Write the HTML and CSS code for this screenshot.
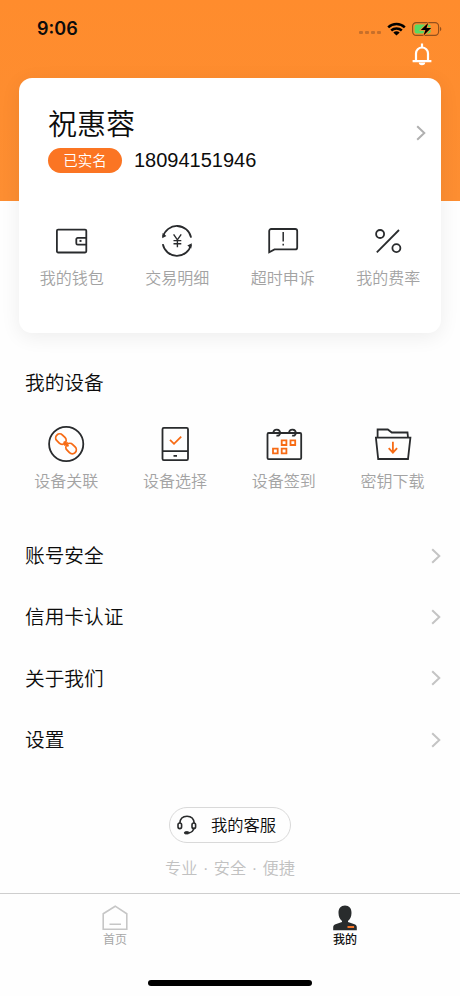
FILE: index.html
```html
<!DOCTYPE html>
<html lang="zh-CN">
<head>
<meta charset="utf-8">
<meta name="viewport" content="width=device-width, initial-scale=1">
<title>我的</title>
<link rel="stylesheet" href="styles.css">
</head>
<body>
<div class="app">
  <header class="hero">
    <div class="status">
      <span class="time">9:06</span>
      <div class="signals">
        <span class="dots"><i></i><i></i><i></i><i></i></span>
        <svg class="wifi" width="19" height="14" viewBox="0 0 19 14" fill="none" stroke="#000" stroke-width="2.5"><path d="M1.2 5.3a12 12 0 0 1 16.6 0M4.2 8.5a7.8 7.8 0 0 1 10.6 0"/><path d="M9.5 13.5 6.3 10.6a4.8 4.8 0 0 1 6.4 0z" fill="#000" stroke="none"/></svg>
        <svg class="battery" width="30" height="16" viewBox="0 0 30 16"><rect x=".6" y="1.6" width="26" height="12.8" rx="3.6" fill="none" stroke="#93501d" stroke-width="1.2"/><rect x="2.6" y="3.6" width="16" height="8.8" rx="2" fill="#58da63"/><path d="M28 5.8c1.8.7 1.8 3.7 0 4.4z" fill="#93501d"/><path d="M16.3 1.8 8.8 9h4.6l-1.9 5.5L19.2 7h-4.7z" fill="#000" stroke="#ff8c2e" stroke-width="1.6" paint-order="stroke"/></svg>
      </div>
    </div>
    <div class="notice">
      <svg width="20" height="24" viewBox="0 0 20 24" fill="none" stroke="#fff" stroke-width="2.2"><path d="M4 18.2V10.5a6 6 0 0 1 12 0v7.7M.6 18.2h18.800M10 .4v4"/><path d="M6.8 19.5h6.4a3.2 2.8 0 0 1-6.4 0z" fill="#fff" stroke="none"/></svg>
    </div>
    <section class="card">
      <div class="profile">
        <div class="identity">
          <h1>祝惠蓉</h1>
          <div class="meta"><span class="badge">已实名</span><span class="phone">18094151946</span></div>
        </div>
        <svg class="arrow" width="10" height="16" viewBox="0 0 10 16"><path d="M1.2 1.2 8.3 8l-7.1 6.8"/></svg>
      </div>
      <div class="grid">
        <a class="tile">
          <svg class="icon" viewBox="0 0 36 36"><rect x="2.9" y="6.6" width="29.4" height="22.9" rx="1.2"/><path d="M32.3 14.9h-8.6a1.4 1.4 0 0 0-1.4 1.4v3.9a1.4 1.4 0 0 0 1.4 1.4h8.6"/><rect class="solid" x="25.5" y="16.9" width="2" height="2"/></svg>
          <span>我的钱包</span>
        </a>
        <a class="tile">
          <svg class="icon" viewBox="0 0 36 36"><path d="M4 13.8a14.4 14.4 0 0 1 28.1.9M3.8 21.2A14.4 14.4 0 0 0 32 21.6"/><path class="solid" d="m3.2 15.3.4-5.3 3.8 3zM32.8 20.2l-.5 5.4-4-3z"/><path d="m14.6 11.4 3.8 5.4 3.8-5.4M18.4 16.8v7.5M14.5 17.6h7.8M14.5 20.8h7.8" stroke-width="1.4"/></svg>
          <span>交易明细</span>
        </a>
        <a class="tile">
          <svg class="icon" viewBox="0 0 36 36"><path d="M4.2 29.3V8a2 2 0 0 1 2-2h24a2 2 0 0 1 2 2v16.4a2 2 0 0 1-2 2H9.5z"/><path d="M18.2 9v9.4M18.2 20.8v1.8" stroke-width="1.5"/></svg>
          <span>超时申诉</span>
        </a>
        <a class="tile">
          <svg class="icon" viewBox="0 0 36 36"><circle cx="10.1" cy="11" r="4"/><circle cx="26.4" cy="25.1" r="4"/><path d="M6.8 29.3 29 7"/></svg>
          <span>我的费率</span>
        </a>
      </div>
    </section>
  </header>

  <main>
    <h2>我的设备</h2>
    <div class="grid devices">
      <a class="tile">
        <svg class="icon" viewBox="0 0 36 36"><circle cx="18.2" cy="18" r="17.1"/><g class="accent"><rect x="7.2" y="9.1" width="11.4" height="8" rx="4" transform="rotate(45 12.9 13.1)"/><rect x="17.4" y="18.6" width="11.4" height="8" rx="4" transform="rotate(45 23.1 22.6)"/><path d="m15.7 15.7 4.8 4.6M19.7 16.4l-3.6 3"/></g></svg>
        <span>设备关联</span>
      </a>
      <a class="tile">
        <svg class="icon" viewBox="0 0 36 36"><rect x="5.5" y="1.9" width="25.5" height="32.2" rx="1.3"/><path d="M5.5 25.2H31M16.5 29.9H20"/><path class="accent" d="m13 13.9 4 3.9 7.2-7.2"/></svg>
        <span>设备选择</span>
      </a>
      <a class="tile">
        <svg class="icon" viewBox="0 0 36 36"><rect x="1.5" y="7" width="33.7" height="26.2" rx="1.2"/><path d="M7.3 6.7c.5-4.2 6.8-4 6.8.3 0 2.3-2 3.2-3.6 2.4M23 6.7c.5-4.2 6.8-4 6.8.3 0 2.3-2 3.2-3.6 2.4"/><g class="accent"><path d="M15.7 14.3h4.7V19h-4.7zM24.5 14.3h4.7V19h-4.7zM7 22.7h4.7v4.7H7zM15.7 22.7h4.7v4.7h-4.7z"/></g></svg>
        <span>设备签到</span>
      </a>
      <a class="tile">
        <svg class="icon" viewBox="0 0 36 36"><path d="M2.6 11.5v-8h10.2l4 3h15.7l.5 5M.9 11.6h34.5L33 33H3.2z"/><path class="accent" d="M17.9 15.8v10.9M13.7 22.2l4.2 4.5 4.2-4.5"/></svg>
        <span>密钥下载</span>
      </a>
    </div>
    <nav class="menu">
      <a><span>账号安全</span><svg class="arrow" width="10" height="16" viewBox="0 0 10 16"><path d="M1.2 1.2 8.3 8l-7.1 6.8"/></svg></a>
      <a><span>信用卡认证</span><svg class="arrow" width="10" height="16" viewBox="0 0 10 16"><path d="M1.2 1.2 8.3 8l-7.1 6.8"/></svg></a>
      <a><span>关于我们</span><svg class="arrow" width="10" height="16" viewBox="0 0 10 16"><path d="M1.2 1.2 8.3 8l-7.1 6.8"/></svg></a>
      <a><span>设置</span><svg class="arrow" width="10" height="16" viewBox="0 0 10 16"><path d="M1.2 1.2 8.3 8l-7.1 6.8"/></svg></a>
    </nav>
    <a class="service">
      <svg width="20" height="20" viewBox="0 0 20 20" fill="none" stroke="#292b2c" stroke-width="1.6"><path d="M2.8 8.2C3.1 3.7 6 1.2 10 1.2s6.9 2.5 7.2 7M17 12.5c-.5 3.2-2.1 4.9-5 5.4"/><rect x="1" y="8" width="3.6" height="5.6" rx="1.8"/><rect x="15" y="8" width="3.6" height="5.6" rx="1.8"/><rect x="7.4" y="16.7" width="4.6" height="2.2" rx="1.1" fill="#292b2c" stroke-width="1"/></svg>
      <span>我的客服</span>
    </a>
    <p class="slogan">专业 · 安全 · 便捷</p>
  </main>

  <footer>
    <div class="tabs">
      <a class="tab">
        <svg width="26" height="26" viewBox="0 0 26 26" fill="none" stroke="#c6c6c6" stroke-width="1.6"><path d="M1.2 8.8 13.200 1.2l11.6 7.6v15.500H1.200zM7.500 19.300h11.500"/></svg>
        <span>首页</span>
      </a>
      <a class="tab active">
        <svg width="26" height="26" viewBox="0 0 26 26" fill="#292c2d"><path d="M13 .5c4.200 0 6.500 2.800 6.500 7.500 0 3.500-1.400 6.500-3.500 7.900v1l6.500 2.300c1.600.6 2.300 1.500 2.300 3.200V25.300H1.200v-2.900c0-1.700.7-2.600 2.300-3.200l6.500-2.300v-1C7.900 14.500 6.500 11.500 6.500 8 6.500 3.300 8.800.5 13 .5z"/><path d="M15.500 22h6.600" stroke="#f6762b" stroke-width="2"/></svg>
        <span>我的</span>
      </a>
    </div>
    <div class="home-bar"></div>
  </footer>
</div>
</body>
</html>
```
FILE: styles.css
```css
* { box-sizing: border-box; margin: 0; padding: 0; }
body {
  background: #fefefe;
  color: #0c0c0c;
  font-family: "Noto Sans CJK SC", sans-serif;
  font-weight: 350;
}
.app { width: 460px; height: 996px; display: flex; flex-direction: column; overflow: hidden; }
.hero { padding: 0 19px; background: linear-gradient(#ff8c2d, #fd8e32) no-repeat 0 0 / 100% 201px; }
.status { height: 43px; padding: 14px 0 0 18px; display: flex; justify-content: space-between; align-items: flex-start; }
.time { font: 600 18px/29px Inter, sans-serif; }
.signals { display: flex; height: 29px; align-items: center; }
.dots { display: flex; gap: 2.5px; padding-top: 8px; margin-right: 6px; }
.dots i { width: 3.6px; height: 3.6px; border-radius: 1px; background: #c76f2a; }
.wifi { margin-right: 6px; }
.battery { margin-right: -1px; }
.notice { height: 35px; display: flex; justify-content: flex-end; padding-right: 9px; }
.card { height: 255px; border-radius: 13px; background: #fff; box-shadow: 0 4px 20px rgba(0, 0, 0, .07); }
.profile { height: 145px; padding: 25px 15px 0 29px; display: flex; justify-content: space-between; }
h1 { font-size: 29px; line-height: 38px; font-weight: 350; }
.profile .arrow { margin-top: 22px; stroke: #b0b0b0; }
.meta { display: flex; align-items: center; height: 25px; margin-top: 7px; }
.badge { width: 74px; height: 25px; border-radius: 13px; background: #fb7523; color: #fff; font-size: 14.5px; line-height: 24px; text-align: center; }
.phone { margin-left: 12px; font: 400 20px/25px "Liberation Sans", sans-serif; }
.arrow { flex: none; fill: none; stroke: #c4c4c4; stroke-width: 2; }
.grid { display: grid; grid-template-columns: repeat(4, 1fr); }
.tile { display: flex; flex-direction: column; align-items: center; color: #a3a3a3; font-size: 16px; line-height: 24px; }
.icon { width: 36px; height: 36px; margin-bottom: 6px; fill: none; stroke: #292b2d; stroke-width: 1.8; overflow: visible; }
.icon .solid { fill: #292b2d; stroke: none; }
.icon .accent { stroke: #f76b15; stroke-width: 1.8; }
main { display: flex; flex-direction: column; }
h2 { margin: 34px 0 0 25px; font-size: 19.7px; line-height: 30px; font-weight: 350; }
.devices { margin: 29px 13px 0 12px; }
.menu { margin-top: 33px; padding: 0 19px 0 25px; }
.menu a { height: 61.3px; display: flex; align-items: center; justify-content: space-between; font-size: 19.7px; }
.menu span { margin-top: -2px; }
.service { align-self: center; width: 122px; height: 36px; margin-top: 37px; padding-left: 7px; display: flex; align-items: center; border: 1px solid #d9d9d9; border-radius: 18px; font-size: 16.3px; }
.service span { margin: -2px 0 0 14px; white-space: nowrap; }
.slogan { margin-top: 13px; text-align: center; color: #c1c1c1; font-family: "Liberation Sans", "Noto Sans CJK SC", sans-serif; font-size: 16.2px; line-height: 24px; word-spacing: 1px; }
footer { height: 103px; margin-top: auto; border-top: 1px solid #cecece; }
.tabs { display: grid; grid-template-columns: 1fr 1fr; height: 86px; padding-top: 11px; }
.tab { display: flex; flex-direction: column; align-items: center; color: #a7a7a7; font-size: 12px; line-height: 16px; font-weight: 400; }
.active { color: #111; font-weight: 500; }
.home-bar { width: 164px; height: 6px; margin: 0 auto; border-radius: 3px; background: #000; }
```
